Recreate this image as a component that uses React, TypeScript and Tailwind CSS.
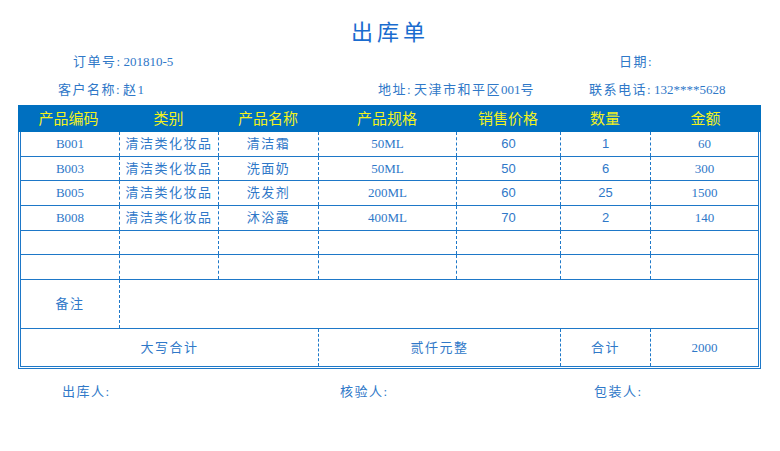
import React from "react";

const cols = [98, 99, 100, 138, 104, 90, 108];
const heads = ["产品编码", "类别", "产品名称", "产品规格", "销售价格", "数量", "金额"];

const rows: string[][] = [
  ["B001", "清洁类化妆品", "清洁霜", "50ML", "60", "1", "60"],
  ["B003", "清洁类化妆品", "洗面奶", "50ML", "50", "6", "300"],
  ["B005", "清洁类化妆品", "洗发剂", "200ML", "60", "25", "1500"],
  ["B008", "清洁类化妆品", "沐浴露", "400ML", "70", "2", "140"],
  ["", "", "", "", "", "", ""],
  ["", "", "", "", "", "", ""],
];
const rowH = ["h-[25px]", "h-[24px]", "h-[25px]", "h-[25px]", "h-[24px]", "h-[25px]"];

const serif = "font-['Liberation_Serif','Noto_Sans_CJK_SC',serif]";
const sans = "font-['Liberation_Sans','Noto_Sans_CJK_SC',sans-serif]";

// chinese words get a little spacing, like the kaiti font in the sheet
const Zh = ({ children }: { children: React.ReactNode }) => (
  <span className="tracking-[1.5px]">{children}</span>
);

const Cell = ({ w, first, children, font }: { w: number; first?: boolean; children?: React.ReactNode; font?: string }) => (
  <div
    style={{ width: w }}
    className={`h-full flex items-center justify-center text-[13px] text-[#2f78c8] ${font ?? serif} ${first ? "" : "border-l border-dashed border-[#1e78c8]"}`}
  >
    {children}
  </div>
);

const isZh = (s: string) => /[\u4e00-\u9fff]/.test(s);

export default function App() {
  return (
    <div className={`w-[780px] h-[451px] bg-white ${serif} text-[#2f78c8]`}>
      <div className="pt-[18px] h-[48px] text-center text-[22px] leading-[30px] tracking-[4px] text-[#1a6ccf]">
        出库单
      </div>

      <div className="h-[28px] flex items-center pl-[73px] text-[13px]">
        <div className="w-[546px]">
          <Zh>订单号</Zh>: 201810-5
        </div>
        <div>
          <Zh>日期</Zh>:
        </div>
      </div>
      <div className="h-[28px] flex items-center pl-[58px] text-[13px]">
        <div className="w-[320px]">
          <Zh>客户名称</Zh>: <Zh>赵</Zh>1
        </div>
        <div className="w-[211px]">
          <Zh>地址</Zh>: <Zh>天津市和平区</Zh>001<Zh>号</Zh>
        </div>
        <div>
          <Zh>联系电话</Zh>: 132****5628
        </div>
      </div>

      <div className="ml-[18px] mt-[1px] w-[743px]">
        <div className="h-[27px] bg-[#0070c0] flex">
          {heads.map((h, i) => (
            <div
              key={h}
              style={{ width: cols[i] + (i === 0 || i === 6 ? 3 : 0) }}
              className="flex items-center justify-center text-[15px] text-[#f2f21e] font-['Noto_Sans_CJK_SC',sans-serif]"
            >
              {h}
            </div>
          ))}
        </div>

        <div className="border-[3px] border-t-0 border-double border-[#1e78c8]">
          {rows.map((r, ri) => (
            <div key={ri} className={`${rowH[ri]} flex border-b border-[#1e78c8]`}>
              {r.map((c, ci) => (
                <Cell key={ci} w={cols[ci]} first={ci === 0} font={ci === 4 || ci === 5 ? sans : serif}>
                  {isZh(c) ? <Zh>{c}</Zh> : c}
                </Cell>
              ))}
            </div>
          ))}

          <div className="h-[49px] flex border-b border-[#1e78c8]">
            <Cell w={98} first>
              <Zh>备注</Zh>
            </Cell>
            <Cell w={639} />
          </div>

          <div className="h-[37px] flex">
            <Cell w={297} first>
              <Zh>大写合计</Zh>
            </Cell>
            <Cell w={242}>
              <Zh>贰仟元整</Zh>
            </Cell>
            <Cell w={90}>
              <Zh>合计</Zh>
            </Cell>
            <Cell w={108}>2000</Cell>
          </div>
        </div>
      </div>

      <div className="h-[20px] mt-[13px] flex items-center text-[13px]">
        <div className="pl-[62px] w-[340px]">
          <Zh>出库人</Zh>:
        </div>
        <div className="w-[254px]">
          <Zh>核验人</Zh>:
        </div>
        <div>
          <Zh>包装人</Zh>:
        </div>
      </div>
    </div>
  );
}
